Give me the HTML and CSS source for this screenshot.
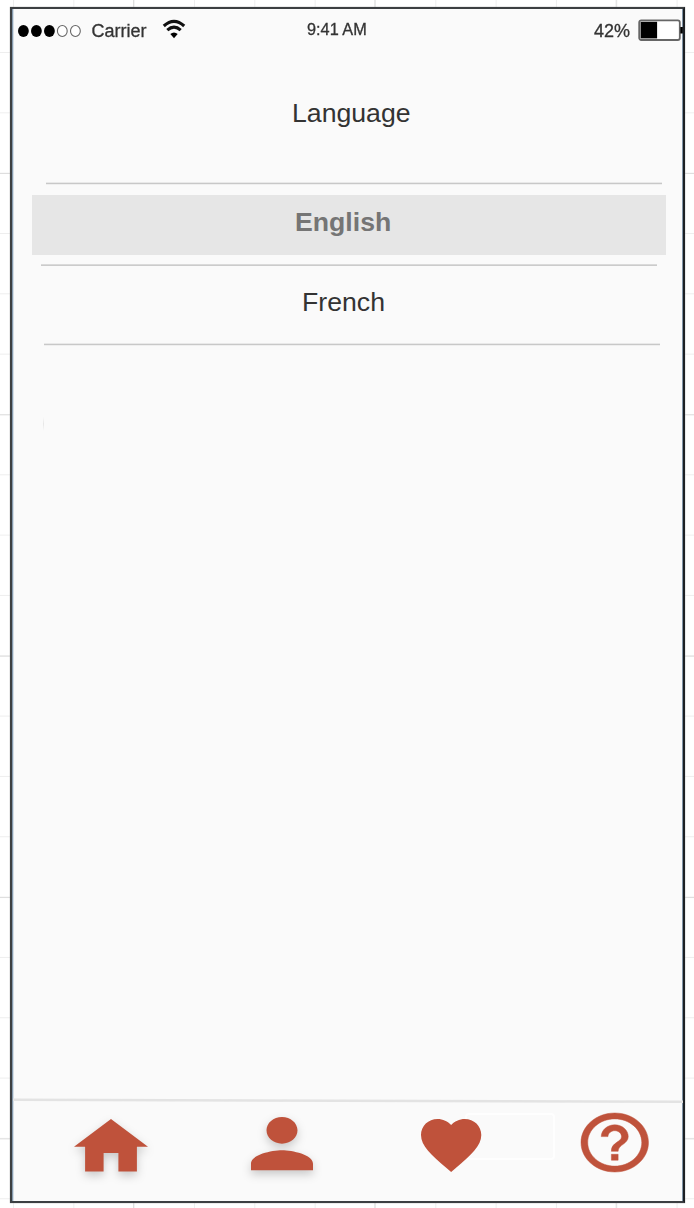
FILE: index.html
```html
<!DOCTYPE html>
<html lang="en">
<head>
<meta charset="utf-8">
<title>Language</title>
<link rel="stylesheet" href="styles.css">
</head>
<body>
<main class="phone">
  <header class="status">
    <svg class="signal" width="66" height="14" viewBox="0 0 66 14">
      <ellipse cx="6.4" cy="7" rx="5.4" ry="6"/><ellipse cx="19.4" cy="7" rx="5.4" ry="6"/><ellipse cx="32.4" cy="7" rx="5.4" ry="6"/>
      <g class="empty"><ellipse cx="45.3" cy="7" rx="4.9" ry="5.5"/><ellipse cx="58.4" cy="7" rx="4.9" ry="5.5"/></g>
    </svg>
    <span class="carrier">Carrier</span>
    <svg class="wifi" width="24" height="20" viewBox="0 0 24 20">
      <path class="arc" d="M1.800 7Q12 -2.400 22.200 7M5.300 11.200Q12 5.200 18.700 11.200"/>
      <path d="M8.300 15Q12 11.800 15.700 15L12 19.200Z"/>
    </svg>
    <time class="clock">9:41 AM</time>
    <span class="percent">42%</span>
    <svg class="battery" width="46" height="23" viewBox="0 0 46 23">
      <rect class="case" x="1.2" y="1.4" width="40.6" height="19.6" rx="2"/>
      <rect x="2.6" y="2.8" width="16.500" height="16.6"/>
      <rect x="42.3" y="8" width="2.500" height="6.5"/>
    </svg>
  </header>
  <h1 class="title">Language</h1>
  <ul class="languages">
    <li class="rule rule-top"></li>
    <li class="language selected">English</li>
    <li class="rule rule-middle"></li>
    <li class="language">French</li>
    <li class="rule rule-bottom"></li>
  </ul>
  <div class="content"></div>
  <svg class="tab-divider" width="672" height="6" viewBox="0 0 672 6"><path d="M1 1.8L671 3.8"/></svg>
  <nav class="tabs">
    <svg class="icon home" viewBox="2 3 20 17" preserveAspectRatio="none"><path d="M10 20v-6h4v6h5v-8h3L12 3 2 12h3v8z"/></svg>
    <svg class="icon person" viewBox="4 4 16 16" preserveAspectRatio="none"><path d="M12 12c2.21 0 4-1.79 4-4s-1.79-4-4-4-4 1.79-4 4 1.79 4 4 4zm0 2c-2.67 0-8 1.34-8 4v2h16v-2c0-2.66-5.33-4-8-4z"/></svg>
    <div class="favorite">
      <svg class="icon heart" viewBox="2 3 20 18.35" preserveAspectRatio="none"><path d="M12 21.35l-1.45-1.32C5.4 15.36 2 12.28 2 8.5 2 5.42 4.42 3 7.5 3c1.74 0 3.41.81 4.5 2.09C13.09 3.81 14.76 3 16.5 3 19.58 3 22 5.42 22 8.5c0 3.78-3.4 6.86-8.55 11.54z"/></svg>
    </div>
    <svg class="icon help" viewBox="2 2 20 20" preserveAspectRatio="none"><path d="M11 18h2v-2h-2v2zm1-16C6.48 2 2 6.48 2 12s4.480 10 10 10 10-4.480 10-10S17.520 2 12 2zm0 18c-4.410 0-8-3.590-8-8s3.590-8 8-8 8 3.590 8 8-3.590 8-8 8zm0-14c-2.210 0-4 1.790-4 4h2c0-1.100.9-2 2-2s2 .9 2 2c0 2-3 1.750-3 5h2c0-2.250 3-2.500 3-5 0-2.210-1.790-4-4-4z"/></svg>
  </nav>
</main>
</body>
</html>
```
FILE: styles.css
```css
* { box-sizing: border-box; }

body {
  margin: 0;
  height: 1208px;
  overflow: hidden;
  padding: 7px 0 0 10px;
  font-family: "Liberation Sans", Arial, sans-serif;
  color: #333;
  background-color: #fff;
  background-image:
    linear-gradient(#dedede 1px, transparent 1px),
    linear-gradient(90deg, #dedede 1px, transparent 1px),
    linear-gradient(#eee 1px, transparent 1px),
    linear-gradient(90deg, #eee 1px, transparent 1px);
  background-size: 100% 241.35px, 241.35px 100%, 100% 60.34px, 60.34px 100%;
  background-position: 0 173px, 133px 0, 0 52px, 13px 0;
}

.phone {
  display: flex;
  flex-direction: column;
  width: 675px;
  height: 1196px;
  background: #fafafa;
  border: solid #3c3f42;
  border-width: 2px;
  border-right-color: #1c2024;
  box-shadow: inset 1px 0 #8599ad, inset 2px 0 #d3dee6, inset -1px 0 #7f93a6, 0 0 1px #888;
}

.status {
  display: flex;
  align-items: flex-start;
  height: 56px;
  padding-left: 5px;
  font-size: 18px;
  line-height: 20px;
  color: #333;
  -webkit-text-stroke: 0.3px #333;
}
.status > * { flex: none; filter: blur(0.6px); }
.signal { margin-top: 15px; }
.empty { fill: #fff; stroke: #666; stroke-width: 1.1; }
.carrier { width: 55px; margin: 12px 0 0 8.5px; }
.wifi { margin: 10px 0 0 15.5px; }
.arc { fill: none; stroke: #111; stroke-width: 3.1; }
.clock { width: 62px; margin: 9.5px 0 0 121px; font-size: 16.3px; white-space: nowrap; }
.percent { width: 36px; margin: 11.5px 0 0 225px; }
.battery { margin: 9.5px 0 0 8px; }
.case { fill: #fff; stroke: #666; stroke-width: 1.8; }

.title {
  margin: 32px 0 0 280px;
  font-size: 26.67px;
  font-weight: 400;
  line-height: 32px;
}

.languages { margin: 53px 0 0; padding: 0; list-style: none; }
.rule {
  width: 616px;
  height: 3px;
  background: linear-gradient(#e9e9e9 1px, #c8c8c8 1px 2px, #efefef 2px);
}
.rule-top { margin-left: 34px; }
.rule-middle { margin: 9px 0 0 29px; background: linear-gradient(#dadada 1px, #cbcbcb 1px 2px, transparent 2px); }
.rule-bottom { margin-left: 31.5px; }
.language {
  height: 76px;
  padding: 19px 0 0 290px;
  font-size: 26.67px;
  line-height: 32px;
}
.selected {
  width: 634px;
  height: 60px;
  margin: 10px 0 0 20.4px;
  padding: 11px 0 0 262.6px;
  font-weight: 700;
  color: #757575;
  background: #e6e6e6;
}

/* Faint edge left of the list area */
.content { flex: 1; }
.content::before {
  content: "";
  display: block;
  width: 1px;
  height: 14px;
  margin: 71px 0 0 31px;
  background: linear-gradient(#fafafa, #e6e6e6, #fafafa);
}

.tab-divider { flex: none; display: block; }
.tab-divider path { stroke: #e3e3e3; stroke-width: 2.4; }

.tabs {
  display: flex;
  align-items: flex-start;
  height: 97px;
  padding-left: 62px;
}
.icon { flex: none; display: block; fill: #bf523b; overflow: visible; }
.home { width: 74px; height: 52.5px; margin-top: 15px; filter: blur(0.4px) drop-shadow(0 4px 5px #0003); }
.person { width: 62px; height: 53.3px; margin: 13px 0 0 103px; filter: blur(0.4px) drop-shadow(0 4px 5px #0003); }
.favorite { position: relative; width: 60.3px; margin: 15px 0 0 108px; }
.heart { position: relative; width: 60.3px; height: 53px; filter: blur(0.4px); }
.favorite::before {
  content: "";
  position: absolute;
  left: 43px;
  top: -6px;
  width: 90px;
  height: 47px;
  border: 2px solid #fefefe;
  border-radius: 4px;
  left: 44px;
  box-sizing: border-box;
}
.help {
  width: 67.5px;
  height: 59px;
  margin: 9px 0 0 99.5px;
  stroke: #bf523b;
  stroke-width: 0.15;
  filter: blur(0.6px);
}
```
